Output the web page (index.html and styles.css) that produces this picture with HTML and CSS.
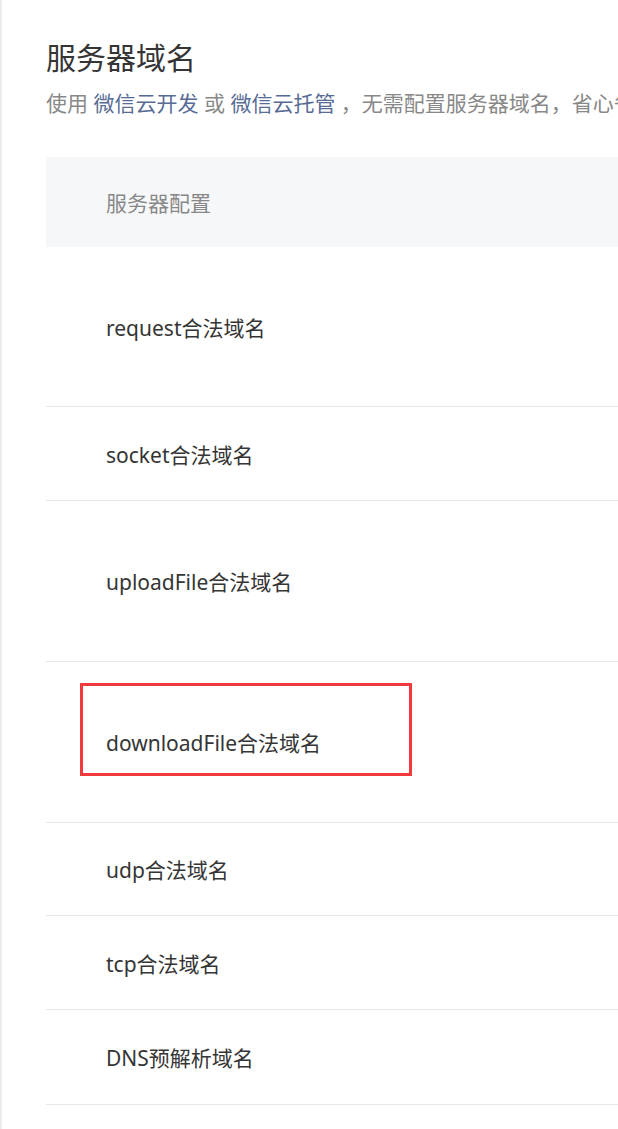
FILE: index.html
```html
<!DOCTYPE html>
<html lang="zh-CN">
<head>
<meta charset="utf-8">
<title>服务器域名</title>
<link rel="stylesheet" href="styles.css">
</head>
<body>
<div class="page">
  <h2 class="title">服务器域名</h2>
  <p class="desc">使用 <a class="link" href="#">微信云开发</a> 或 <a class="link" href="#">微信云托管</a> ，无需配置服务器域名，省心省事。</p>
  <div class="table">
    <div class="thead">服务器配置</div>
    <div class="row row--h160">request合法域名</div>
    <div class="row row--h94">socket合法域名</div>
    <div class="row row--h161">uploadFile合法域名</div>
    <div class="row row--h161">downloadFile合法域名<span class="highlight"></span></div>
    <div class="row row--h93">udp合法域名</div>
    <div class="row row--h94">tcp合法域名</div>
    <div class="row row--h95">DNS预解析域名</div>
  </div>
</div>
</body>
</html>
```

FILE: styles.css
```css
html, body {
  margin: 0;
  padding: 0;
  background: #fff;
  overflow: hidden;
}
body {
  font-family: "Noto Sans", "Noto Sans CJK SC", sans-serif;
  color: #353535;
}
.page {
  border-left: 2px solid #ececec;
  padding: 36px 0 0 44px;
  min-height: 1129px;
  box-sizing: border-box;
}
.title {
  margin: 0;
  font-size: 30px;
  font-weight: 400;
  line-height: 44px;
  color: #353535;
}
.desc {
  margin: 8px 0 0;
  font-size: 21px;
  line-height: 30px;
  color: #888;
  white-space: nowrap;
  overflow: hidden;
}
.link {
  color: #576b95;
  text-decoration: none;
}
.table {
  margin-top: 39px;
}
.thead {
  height: 90px;
  background: #f6f7f9;
  display: flex;
  align-items: center;
  padding-left: 60px;
  font-size: 21px;
  color: #888;
}
.row {
  position: relative;
  display: flex;
  align-items: center;
  padding-left: 60px;
  border-bottom: 1px solid #e8e8e8;
  box-sizing: border-box;
  font-size: 21px;
  color: #353535;
}
.row--h160 { height: 160px; }
.row--h94 { height: 94px; }
.row--h161 { height: 161px; }
.row--h93 { height: 93px; }
.row--h95 { height: 95px; }
.highlight {
  position: absolute;
  left: 34px;
  top: 21px;
  width: 332px;
  height: 93px;
  border: 3px solid #f23a3c;
  box-sizing: border-box;
}
```
